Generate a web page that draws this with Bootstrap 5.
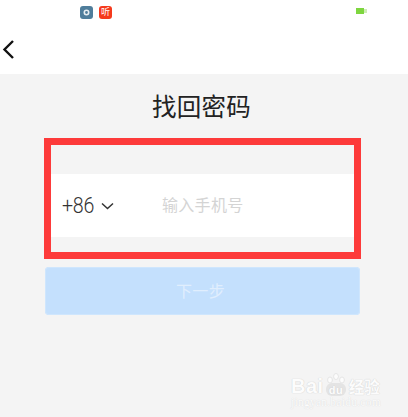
<!DOCTYPE html>
<html lang="zh-CN">
<head>
  <meta charset="UTF-8" />
  <title>找回密码</title>
  <link href="https://cdn.jsdelivr.net/npm/bootstrap@5.3.0/dist/css/bootstrap.min.css" rel="stylesheet"/>
  <style>
    html, body { height: 100%; }
    body {
      background: #f4f4f4;
      font-family: "Roboto", "Noto Sans CJK SC", sans-serif;
      overflow: hidden;
      position: relative;
    }
    .top-area { background: #fff; height: 74px; }
    .status-row { height: 24px; padding: 6px 40px 0 80px; }
    .app-icon { width: 13px; height: 13px; border-radius: 3px; }
    .app-blue { background: #4f7d9b; }
    .app-red { background: #f5391c; color: #fff; font-size: 9px; line-height: 13px; margin-left: 6px; }
    .batt { margin-top: 2px; }
    .back-row { height: 50px; }
    .page-title {
      font-family: "Noto Sans CJK SC", sans-serif;
      font-size: 24.5px; line-height: 34px; color: #222;
      margin: 15px 0 15px; padding-right: 5px; font-weight: 400; letter-spacing: .3px;
    }
    .red-box {
      margin: 0 47px 0 44px;
      border: 7px solid #fd3a3a;
      padding: 29px 0 15px;
    }
    .phone-row { background: #fff; height: 63px; padding-left: 11px; }
    .code-text {
      font-size: 22.5px; color: #333; width: 39px; font-weight: 300; letter-spacing: -.3px;
      transform: scaleX(.87); transform-origin: left center; white-space: nowrap;
    }
    .phone-hint {
      font-family: "Noto Sans CJK SC", sans-serif;
      font-size: 16px; color: #d4d4d4; margin: -4px 0 0 48px; letter-spacing: .3px;
    }
    .next-btn {
      margin: 8px 48px 0 45px; height: 48px;
      background: #c4e0fd; border-radius: 4px;
      font-family: "Noto Sans CJK SC", sans-serif;
      font-size: 16px; color: #e0eefd; letter-spacing: .4px;
      padding: 0 4px 2px 0;
      box-shadow: 0 0 0 1px #cfe6fd inset;
    }
    .wm {
      position: absolute; left: 291px; top: 370px; width: 92px;
      color: #fcfcfc;
    }
    .wm-main {
      font-family: "Liberation Sans", sans-serif; font-size: 20px; font-weight: 700;
      line-height: 22px; letter-spacing: .5px; height: 27px;
      text-shadow: 0 0 1px #d4d4d4, 0 0 1px #d4d4d4;
    }
    .wm-cn { font-family: "Noto Sans CJK SC", sans-serif; font-size: 15.5px; margin-left: 1px; letter-spacing: 0; }
    .wm-site {
      font-family: "Liberation Serif", serif; font-size: 11.5px; line-height: 10px;
      letter-spacing: .25px; white-space: nowrap; text-shadow: 0 0 1px #cfcfcf;
    }
  </style>
</head>
<body>
  <div class="top-area">
    <div class="status-row d-flex align-items-start">
      <div class="app-icon app-blue d-flex align-items-center justify-content-center">
        <svg width="7" height="7" viewBox="0 0 7 7"><circle cx="3.5" cy="3.5" r="2.2" fill="none" stroke="#e8eef2" stroke-width="1.6"/></svg>
      </div>
      <div class="app-icon app-red text-center me-auto">听</div>
      <svg class="batt" width="12" height="8" viewBox="0 0 12 8"><rect x="0" y="0" width="8" height="6" fill="#7ed63f"/><rect x="8" y="1" width="3" height="4" fill="#cdeeb4"/></svg>
    </div>
    <div class="back-row d-flex align-items-center">
      <svg width="16" height="22" viewBox="0 0 16 22"><path d="M13 3 L4.5 11.5 L13 20" fill="none" stroke="#111" stroke-width="2.4"/></svg>
    </div>
  </div>

  <h1 class="page-title text-center">找回密码</h1>

  <div class="red-box">
    <div class="phone-row d-flex align-items-center">
      <span class="code-text">+86</span>
      <svg width="13" height="8" viewBox="0 0 13 8"><path d="M1 1.5 L6.5 6.5 L12 1.5" fill="none" stroke="#333" stroke-width="1.5"/></svg>
      <span class="phone-hint">输入手机号</span>
    </div>
  </div>

  <div class="next-btn d-flex align-items-center justify-content-center">下一步</div>

  <div class="wm">
    <div class="wm-main d-flex align-items-end">Bai<svg width="24" height="24" viewBox="0 0 24 24"><g fill="#fcfcfc" stroke="#dcdcdc" stroke-width=".7"><ellipse cx="6" cy="7" rx="2.4" ry="3"/><ellipse cx="12" cy="3.5" rx="2.4" ry="3"/><ellipse cx="18" cy="7" rx="2.4" ry="3"/></g><rect x="2" y="10" width="20" height="13" rx="6" fill="#e4e4e4"/><text x="12" y="21" text-anchor="middle" font-size="11" font-family="Liberation Sans" font-weight="700" fill="#fcfcfc">du</text></svg><span class="wm-cn">经验</span></div>
    <div class="wm-site">jingyan.baidu.com</div>
  </div>
</body>
</html>
